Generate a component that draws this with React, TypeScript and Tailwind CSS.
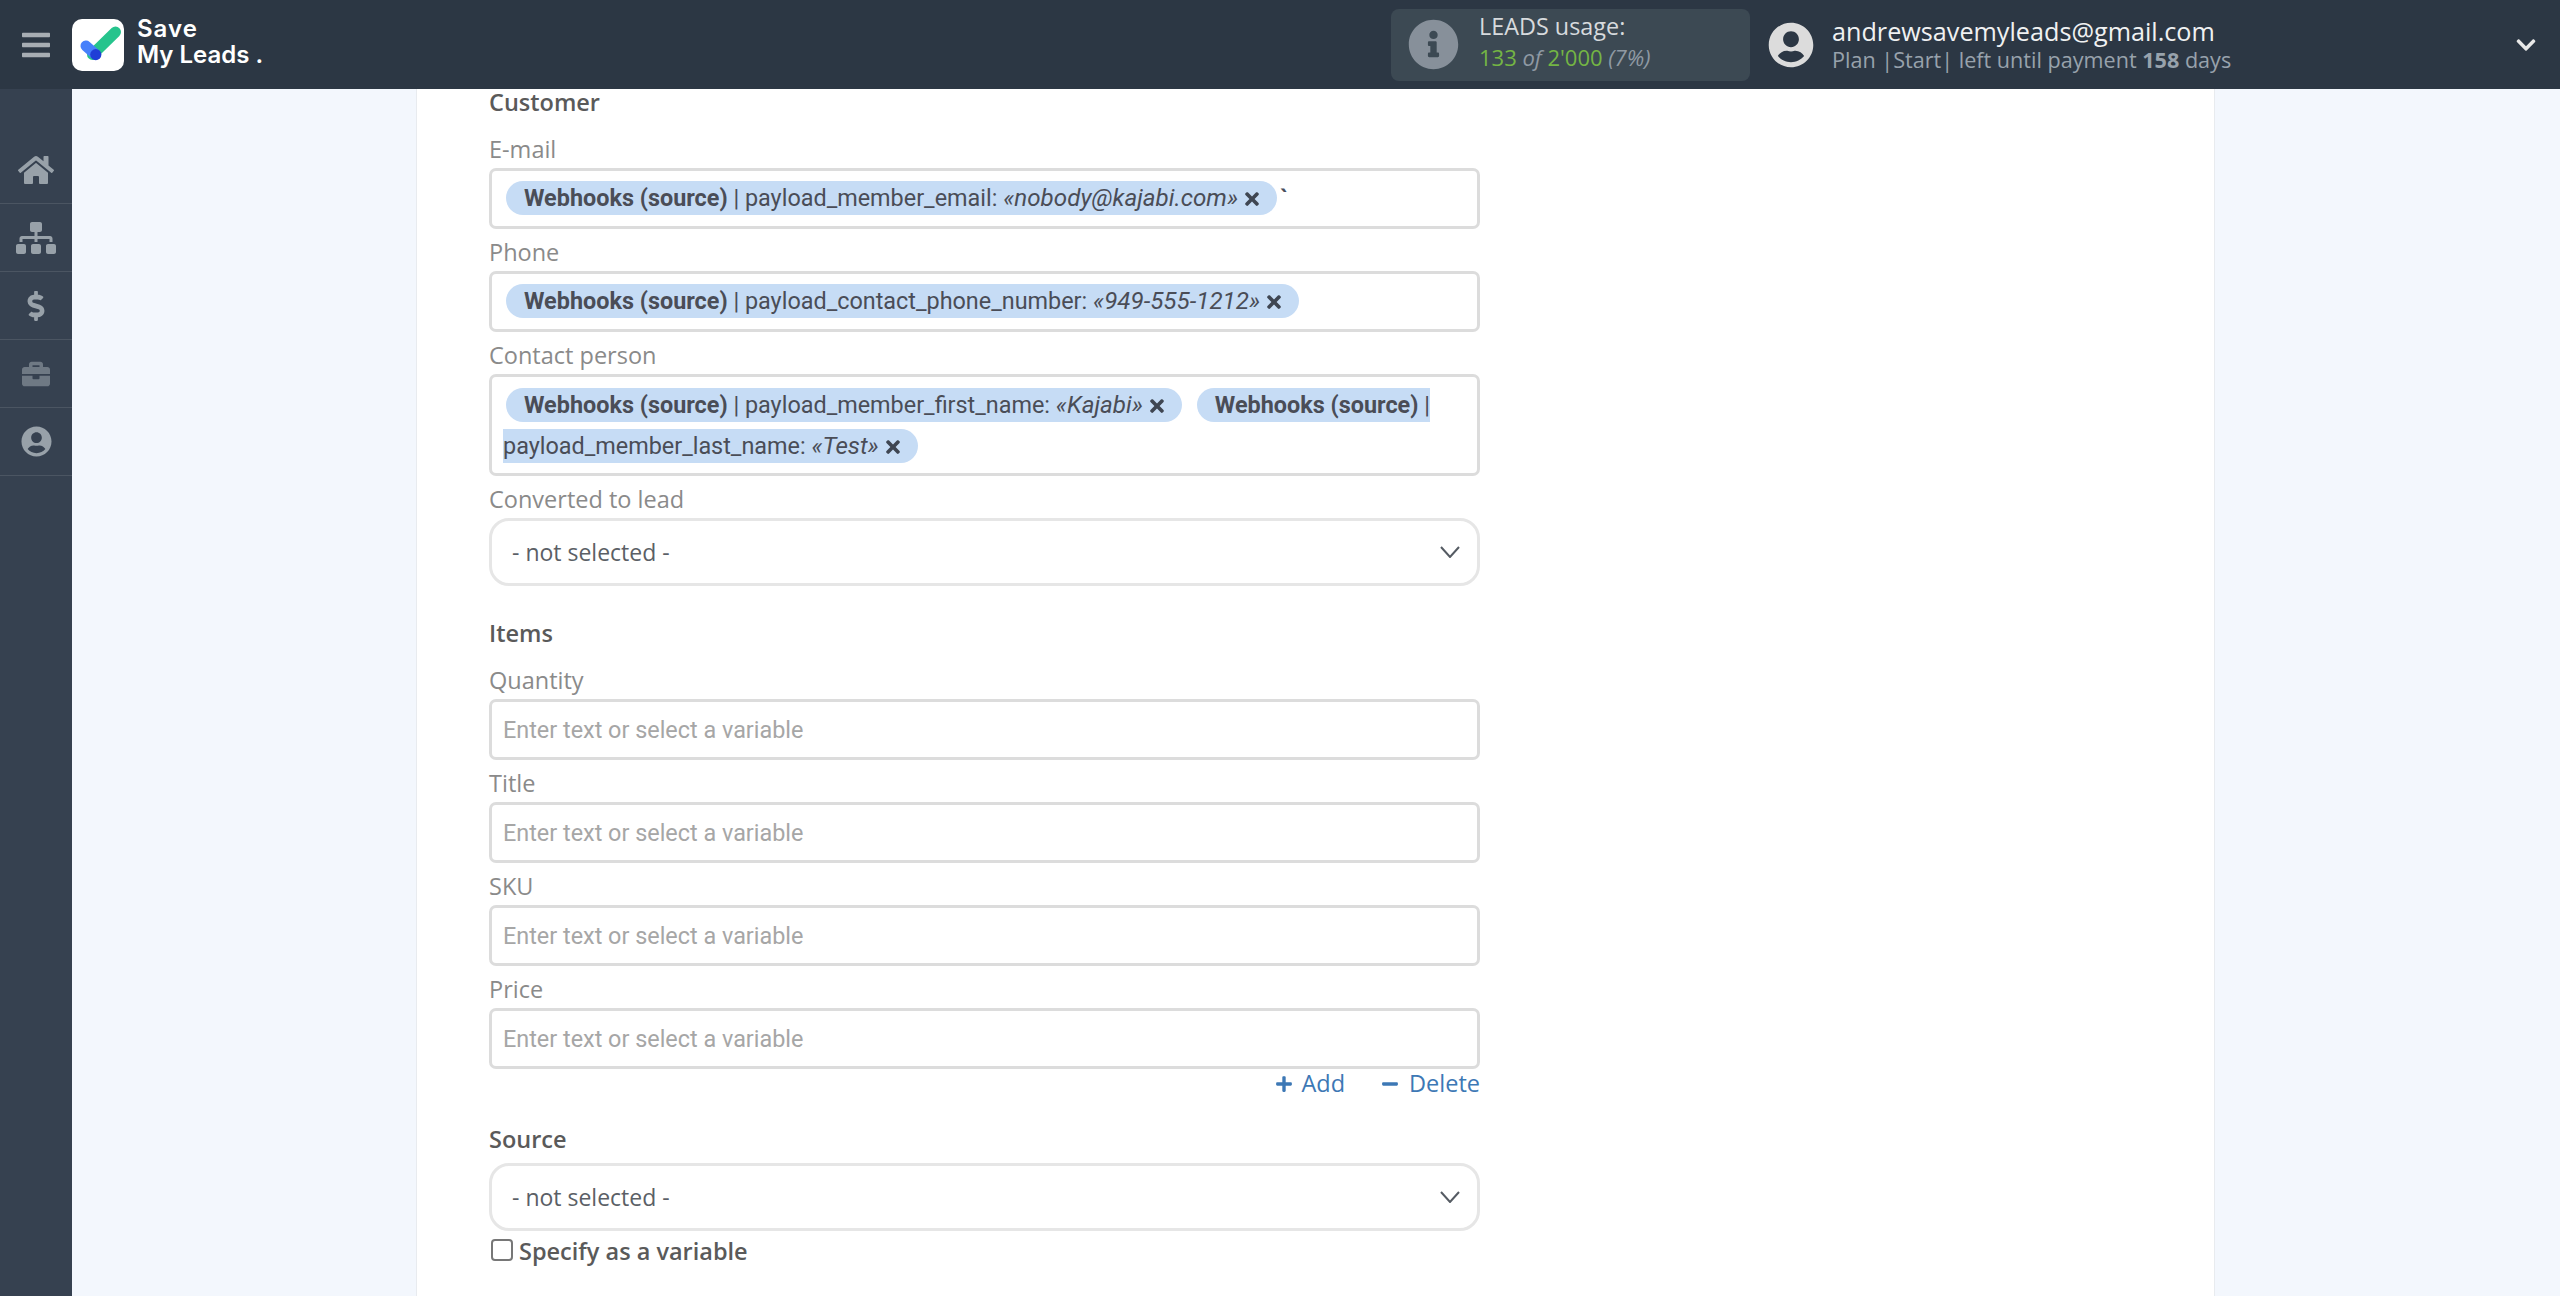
import type { ReactNode } from "react";
import { FaBars, FaBriefcase, FaChevronDown, FaDollarSign, FaHome, FaInfoCircle, FaMinus, FaPlus, FaSitemap, FaTimes, FaUserCircle } from "react-icons/fa";

const font = "font-['Open_Sans',sans-serif]";

function Logo() {
  return (
    <svg viewBox="0 0 52 52" className="w-[52px] h-[52px]">
      <rect width="52" height="52" rx="10" fill="#ffffff" />
      <path d="M20.5 35.5 L43.5 13" stroke="#26c48d" strokeWidth="11" strokeLinecap="round" />
      <path d="M14 27 L23 35" stroke="#4680fb" strokeWidth="11" strokeLinecap="round" />
      <circle cx="23.8" cy="35.6" r="5.6" fill="#1f3fd6" />
    </svg>
  );
}

function Header() {
  return (
    <header className="h-[89px] shrink-0 bg-[#2c3744] flex items-center text-white pr-[22px]">
      <div className="w-[72px] flex justify-center text-[#a7adb3]">
        <FaBars className="w-[28px] h-[32px]" />
      </div>
      <Logo />
      <div className="ml-[13px] mb-[6px] font-['Inter',sans-serif] font-semibold text-[24px] leading-[26px]">
        <div className="tracking-[1px]">Save</div>
        <div>My Leads .</div>
      </div>
      <div className="ml-auto w-[359px] h-[72px] rounded-[8px] bg-[#3c4953] flex items-center pl-[17px]">
        <FaInfoCircle className="w-[51px] h-[51px] text-[#87909a]" />
        <div className="ml-[20px] mb-[5px]">
          <div className="text-[23.4px] leading-[31px] text-[#d7dadd]">LEADS usage:</div>
          <div className="text-[22px] leading-[31px] italic text-[#8f99a3]">
            <span className="not-italic text-[#74b544]">133</span> of <span className="not-italic text-[#74b544]">2'000</span> (7%)
          </div>
        </div>
      </div>
      <FaUserCircle className="ml-[18px] w-[46px] h-[46px] text-[#dcdcdc]" />
      <div className="ml-[18px] w-[682px]">
        <div className="text-[25.2px] leading-[30px] text-[#f0f1f2]">andrewsavemyleads@gmail.com</div>
        <div className="text-[21.6px] leading-[28px] text-[#98a2ac]">
          Plan |Start| left until payment <b>158</b> days
        </div>
      </div>
      <FaChevronDown className="w-[24px] h-[22px] text-[#e8e8e8]" />
    </header>
  );
}

function Sidebar() {
  const items = [
    { icon: <FaHome className="w-[36px] h-[32px] text-[#98a1a9]" /> },
    { icon: <FaSitemap className="w-[40px] h-[32px] text-[#98a1a9]" /> },
    { icon: <FaDollarSign className="w-[18px] h-[30px] text-[#98a1a9]" /> },
    { icon: <FaBriefcase className="w-[32px] h-[28px] text-[#6f7984]" /> },
    { icon: <FaUserCircle className="w-[31px] h-[31px] text-[#98a1a9]" /> },
  ];
  return (
    <aside className="w-[72px] shrink-0 bg-[#364150] pt-[47px]">
      {items.map((it, i) => (
        <div key={i} className="h-[68px] flex items-center justify-center border-b border-[#4b5562]">
          {it.icon}
        </div>
      ))}
    </aside>
  );
}

function Chip({ source, field, value }: { source: string; field: string; value: string }) {
  return (
    <span className="ml-[3px] mr-[12px] bg-[#c6dcf5] rounded-[18px] px-[18px] py-[3px] text-[#4a4d57]">
      <b>{source}</b> | {field}: <i className="text-[24.2px]">«{value}»</i>
      <FaTimes className="inline w-[14px] h-[20px] ml-[7px] -mt-[2px] text-[#3f4652]" />
    </span>
  );
}

function FieldLabel({ children }: { children: ReactNode }) {
  return <div className="h-[36px] leading-[35px] text-[23.5px] text-[#8a8a8a]">{children}</div>;
}

function Field({ label, children }: { label: string; children: ReactNode }) {
  return (
    <div className="mb-[6px]">
      <FieldLabel>{label}</FieldLabel>
      {children}
    </div>
  );
}

function ChipBox({ children, tall }: { children: ReactNode; tall?: boolean }) {
  return (
    <div className={`border-[3px] border-[#dcdcdc] rounded-[7px] px-[11px] font-['Roboto',sans-serif] text-[23.4px] leading-[41px] ${tall ? "h-[102px] pt-[8px]" : "h-[61px] pt-[7px]"}`}>
      {children}
    </div>
  );
}

function TextInput() {
  return (
    <input
      placeholder="Enter text or select a variable"
      className="block w-full h-[61px] border-[3px] border-[#dcdcdc] rounded-[7px] px-[11px] font-['Roboto',sans-serif] text-[23.4px] outline-none placeholder:text-[#a6a6a6]"
    />
  );
}

function SelectBox() {
  return (
    <div className="h-[68px] border-[3px] border-[#e6e6e6] rounded-[20px] pl-[20px] pr-[17px] flex items-center justify-between text-[23px] text-[#5b5f66]">
      <span>- not selected -</span>
      <svg viewBox="0 0 20 12" className="w-[20px] h-[12px]">
        <path d="M1 1 L10 11 L19 1" fill="none" stroke="#555b63" strokeWidth="2" />
      </svg>
    </div>
  );
}

function Heading({ children, className }: { children: ReactNode; className?: string }) {
  return <div className={`h-[28px] leading-[26px] text-[23.5px] font-semibold text-[#5a5a5a] ${className ?? ""}`}>{children}</div>;
}

export default function App() {
  return (
    <div className={`h-screen overflow-hidden flex flex-col ${font}`}>
      <Header />
      <div className="flex flex-1 min-h-0">
        <Sidebar />
        <main className="flex-1 bg-[#f3f7fd]">
          <div className="ml-[344px] w-[1799px] h-full bg-white border-x border-[#e8ebef] pl-[72px]">
            <div className="w-[991px]">
              <Heading className="mb-[15px]">Customer</Heading>
              <Field label="E-mail">
                <ChipBox>
                  <Chip source="Webhooks (source)" field="payload_member_email" value="nobody@kajabi.com" />
                  <span className="-ml-[9px] font-bold text-[#4a4f5c]">`</span>
                </ChipBox>
              </Field>
              <Field label="Phone">
                <ChipBox>
                  <Chip source="Webhooks (source)" field="payload_contact_phone_number" value="949-555-1212" />
                </ChipBox>
              </Field>
              <Field label="Contact person">
                <ChipBox tall>
                  <Chip source="Webhooks (source)" field="payload_member_first_name" value="Kajabi" />
                  <Chip source="Webhooks (source)" field="payload_member_last_name" value="Test" />
                </ChipBox>
              </Field>
              <Field label="Converted to lead">
                <SelectBox />
              </Field>
              <Heading className="mt-[34px] mb-[15px]">Items</Heading>
              <Field label="Quantity">
                <TextInput />
              </Field>
              <Field label="Title">
                <TextInput />
              </Field>
              <Field label="SKU">
                <TextInput />
              </Field>
              <div>
                <FieldLabel>Price</FieldLabel>
                <TextInput />
              </div>
              <div className="h-[30px] flex items-center justify-end gap-[36px] text-[23.5px] text-[#3d78b5]">
                <span className="flex items-center gap-[8px]">
                  <FaPlus className="w-[18px] h-[18px]" />
                  Add
                </span>
                <span className="flex items-center gap-[10px]">
                  <FaMinus className="w-[18px] h-[18px]" />
                  Delete
                </span>
              </div>
              <Heading className="mt-[27px] mb-[9px]">Source</Heading>
              <SelectBox />
              <label className="mt-[3px] h-[36px] flex items-center gap-[6px] text-[23.5px] font-semibold text-[#5a5a5a]">
                <input type="checkbox" className="w-[22px] h-[22px] -mt-[4px] ml-[2px] appearance-none border-2 border-[#777] rounded-[4px] bg-white" />
                Specify as a variable
              </label>
            </div>
          </div>
        </main>
      </div>
    </div>
  );
}
